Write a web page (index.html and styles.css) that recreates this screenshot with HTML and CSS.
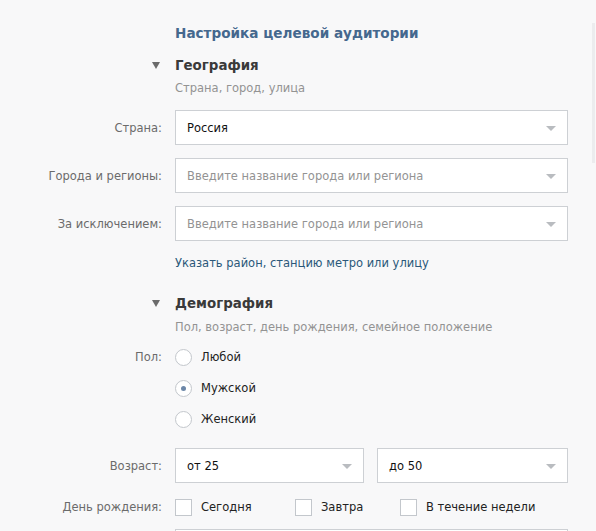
FILE: index.html
```html
<!DOCTYPE html>
<html lang="ru">
<head>
<meta charset="utf-8">
<link rel="stylesheet" href="styles.css">
</head>
<body>
<div class="page">
  <div class="scroll-hint"></div>

  <h1 class="title">Настройка целевой аудитории</h1>

  <div class="section-head section-geo"><span class="caret"></span><span>География</span></div>
  <div class="hint">Страна, город, улица</div>

  <div class="fields fields-geo">
    <div class="row">
      <label class="label">Страна:</label>
      <div class="select"><span class="value">Россия</span><span class="arrow"></span></div>
    </div>
    <div class="row">
      <label class="label">Города и регионы:</label>
      <div class="select"><span class="placeholder">Введите название города или региона</span><span class="arrow"></span></div>
    </div>
    <div class="row">
      <label class="label">За исключением:</label>
      <div class="select"><span class="placeholder">Введите название города или региона</span><span class="arrow"></span></div>
    </div>
  </div>

  <a class="link">Указать район, станцию метро или улицу</a>

  <div class="section-head section-demo"><span class="caret"></span><span>Демография</span></div>
  <div class="hint hint-demo">Пол, возраст, день рождения, семейное положение</div>

  <div class="radio-block">
    <div class="radio-row">
      <span class="label">Пол:</span>
      <span class="radio"></span><span class="opt">Любой</span>
    </div>
    <div class="radio-row">
      <span class="label"></span>
      <span class="radio checked"></span><span class="opt">Мужской</span>
    </div>
    <div class="radio-row">
      <span class="label"></span>
      <span class="radio"></span><span class="opt">Женский</span>
    </div>
  </div>

  <div class="row row-age">
    <label class="label">Возраст:</label>
    <div class="pair">
      <div class="select"><span class="value">от 25</span><span class="arrow"></span></div>
      <div class="select"><span class="value">до 50</span><span class="arrow"></span></div>
    </div>
  </div>

  <div class="check-row">
    <span class="label">День рождения:</span>
    <div class="checks">
      <span class="check-item"><span class="box"></span><span class="opt">Сегодня</span></span>
      <span class="check-item"><span class="box"></span><span class="opt">Завтра</span></span>
      <span class="check-item"><span class="box"></span><span class="opt">В течение недели</span></span>
    </div>
  </div>

  <div class="row row-last">
    <span class="label"></span>
    <div class="select"></div>
  </div>
</div>
</body>
</html>
```

FILE: styles.css
```css
html, body {
  margin: 0;
  padding: 0;
  background: #f8f8f9;
  height: 100%;
  overflow: hidden;
}
body {
  font-family: "DejaVu Sans", "Liberation Sans", sans-serif;
  font-size: 11.5px;
  color: #222;
}
.page {
  position: relative;
  width: 596px;
  height: 531px;
  overflow: hidden;
}
.scroll-hint {
  position: absolute;
  left: 592px;
  top: 23px;
  width: 3px;
  height: 140px;
  background: #ececee;
}
.title {
  margin: 23px 0 0 175px;
  font-size: 13.6px;
  line-height: 20px;
  font-weight: bold;
  color: #45688e;
}
.section-head {
  display: flex;
  align-items: center;
  height: 20px;
  font-size: 13.4px;
  font-weight: bold;
  color: #3a3a3a;
}
.section-geo { margin-top: 12px; }
.section-demo { margin-top: 22px; }
.caret {
  width: 0;
  height: 0;
  margin-left: 152px;
  margin-right: 15px;
  border-left: 4px solid transparent;
  border-right: 4px solid transparent;
  border-top: 7px solid #6b6b6b;
}
.hint {
  margin: 5px 0 0 175px;
  line-height: 16px;
  font-size: 11.5px;
  color: #939393;
}
.hint-demo { margin-top: 6px; }
.fields {
  display: flex;
  flex-direction: column;
  gap: 13px;
  margin-top: 14px;
}
.row {
  display: grid;
  grid-template-columns: 162px 393px;
  column-gap: 13px;
  align-items: center;
  height: 35px;
}
.label {
  text-align: right;
  color: #6b6b6b;
  white-space: nowrap;
}
.select {
  box-sizing: border-box;
  height: 35px;
  background: #fff;
  border: 1px solid #cdd0d4;
  display: flex;
  align-items: center;
  padding: 0 11px;
  position: relative;
}
.value { color: #111; }
.placeholder { color: #939393; }
.arrow {
  position: absolute;
  right: 11px;
  top: 15px;
  width: 0;
  height: 0;
  border-left: 5px solid transparent;
  border-right: 5px solid transparent;
  border-top: 5px solid #b9bcc0;
}
.link {
  display: block;
  margin: 14px 0 0 175px;
  line-height: 16px;
  color: #2b587a;
  cursor: pointer;
}
.radio-block {
  display: flex;
  flex-direction: column;
  gap: 11px;
  margin-top: 12px;
}
.radio-row {
  display: grid;
  grid-template-columns: 175px 17px auto;
  align-items: center;
  height: 20px;
}
.radio-row .label {
  box-sizing: border-box;
  padding-right: 13px;
}
.radio {
  box-sizing: border-box;
  width: 17px;
  height: 17px;
  border-radius: 50%;
  border: 1px solid #c3c7cc;
  background: #fff;
  position: relative;
}
.radio.checked::after {
  content: "";
  position: absolute;
  left: 5px;
  top: 5px;
  width: 5px;
  height: 5px;
  border-radius: 50%;
  background: #6c87a8;
}
.opt {
  margin-left: 9px;
  color: #222;
}
.row-age { margin-top: 19px; }
.pair {
  display: grid;
  grid-template-columns: 189px 191px;
  column-gap: 13px;
}
.check-row {
  display: grid;
  grid-template-columns: 162px auto;
  column-gap: 13px;
  align-items: center;
  height: 20px;
  margin-top: 14px;
}
.checks {
  display: grid;
  grid-template-columns: 120px 105px auto;
  align-items: center;
}
.check-item {
  display: flex;
  align-items: center;
}
.box {
  box-sizing: border-box;
  width: 17px;
  height: 17px;
  border: 1px solid #c3c7cc;
  background: #fff;
}
.check-item .opt { margin-left: 9px; }
.row-last { margin-top: 12px; }
```
